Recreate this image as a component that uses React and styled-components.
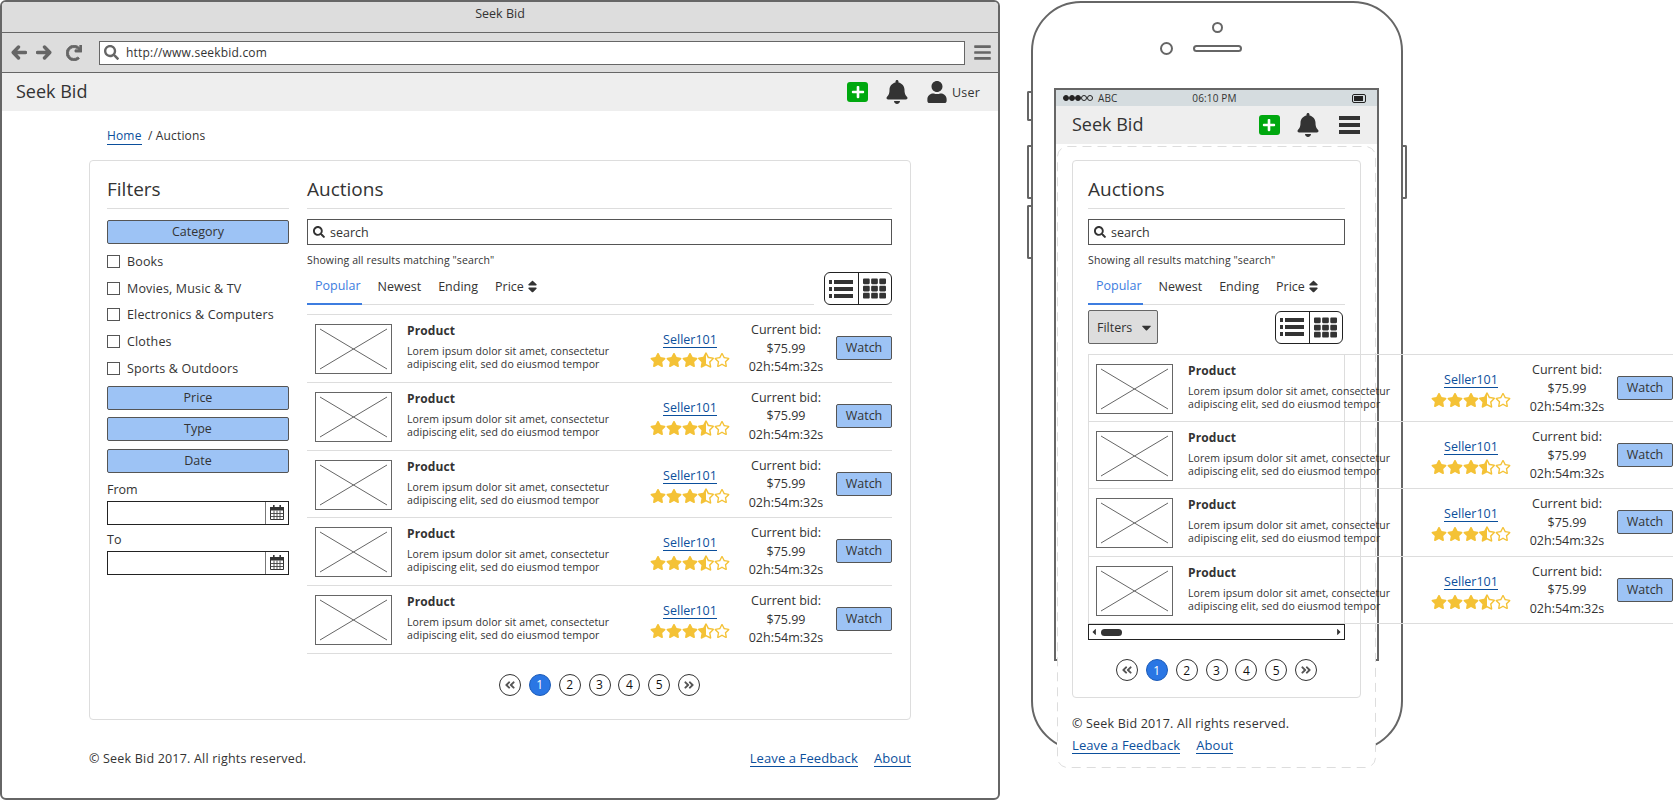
import React from "react";
import styled, { createGlobalStyle } from "styled-components";
import {
  FaAngleDoubleLeft,
  FaAngleDoubleRight,
  FaBars,
  FaBell,
  FaCaretDown,
  FaCaretLeft,
  FaCaretRight,
  FaPlus,
  FaRedo,
  FaRegStar,
  FaSearch,
  FaSort,
  FaStar,
  FaStarHalfAlt,
  FaTh,
  FaUser,
} from "react-icons/fa";

const INK = "#333";
const LINE = "#ddd";
const LINK = "#0b4f9c";

const GlobalStyle = createGlobalStyle`
  html, body {
    margin: 0;
    background: #fff;
    overflow: hidden;
  }
  body {
    font-family: "Open Sans", "Liberation Sans", sans-serif;
    color: ${INK};
  }
  * { box-sizing: border-box; }
`;

const Page = styled.div`
  display: flex;
  align-items: flex-start;
  gap: 31px;
  width: 1673px;
  height: 800px;
`;

/* desktop browser */
const Browser = styled.div`
  width: 1000px;
  height: 800px;
  border: 2px solid #666;
  border-radius: 6px;
  overflow: hidden;
  flex: none;
`;

const TitleBar = styled.div`
  height: 31px;
  background: #ddd;
  border-bottom: 1px solid #666;
  font-size: 12.5px;
  text-align: center;
  line-height: 24px;
`;

const Toolbar = styled.div`
  display: flex;
  align-items: center;
  height: 40px;
  background: #ddd;
  border-bottom: 1px solid #666;
  color: #666;
  padding-left: 9px;
`;

const NavIcons = styled.div`
  display: flex;
  align-items: center;
  gap: 9px;
  width: 88px;
  flex: none;
  font-size: 16px;
`;

const ReloadIcon = styled(FaRedo)`
  margin-left: 5px;
  stroke: currentColor;
  stroke-width: 30px;
`;

const UrlField = styled.div`
  display: flex;
  align-items: center;
  gap: 7px;
  width: 866px;
  height: 24px;
  flex: none;
  background: #fff;
  border: 1px solid #666;
  padding: 0 4px;
  color: ${INK};
  font-size: 12px;
  letter-spacing: 0.2px;
  svg { color: #666; font-size: 15px; }
`;

const MenuSlot = styled.div`
  display: flex;
  margin-left: 8px;
  font-size: 19px;
`;

const AppBar = styled.div`
  display: flex;
  align-items: center;
  height: 38px;
  background: #eee;
  padding: 0 ${p => (p.$phone ? "17px 0 16px" : "18px 0 14px")};
`;

const Brand = styled.div`
  font-size: 18px;
  flex: 1;
  margin-top: -2px;
`;

const AddButton = styled.div`
  display: flex;
  align-items: center;
  justify-content: center;
  width: 21px;
  height: 20px;
  background: #00a80f;
  border-radius: 3px;
  color: #fff;
  font-size: 14px;
`;

const BellSlot = styled.div`
  display: flex;
  margin-left: 16.5px;
  font-size: 24px;
`;

const UserSlot = styled.div`
  display: flex;
  align-items: center;
  gap: 4.5px;
  margin-left: 17px;
  font-size: 12.5px;
  letter-spacing: 0.2px;
  svg { font-size: 22px; }
`;

const MenuBars = styled.div`
  display: flex;
  flex-direction: column;
  gap: 3px;
  width: 21px;
  margin-left: 19px;
  span {
    height: 4px;
    background: ${INK};
  }
`;

const Breadcrumb = styled.div`
  margin: 17px 0 0 105px;
  height: 17px;
  font-size: 12px;
  line-height: 16px;
  letter-spacing: 0.15px;
`;

const Link = styled.a`
  color: ${LINK};
  border-bottom: 1px solid ${LINK};
`;

const Card = styled.div`
  display: flex;
  gap: 18px;
  width: ${p => (p.$phone ? "289px" : "822px")};
  height: ${p => (p.$phone ? "538px" : "560px")};
  margin: ${p => (p.$phone ? "13px 0 0 15px" : "15px 0 0 87px")};
  padding: ${p => (p.$phone ? "16px 15px" : "16px 17px")};
  border: 1px solid ${LINE};
  border-radius: 4px;
`;

const FiltersColumn = styled.div`
  width: 182px;
  flex: none;
`;

const AuctionsColumn = styled.div`
  width: ${p => (p.$phone ? "257px" : "585px")};
  flex: none;
`;

const Heading = styled.h2`
  margin: 0;
  height: 32px;
  font-size: 19px;
  font-weight: 400;
  line-height: 24px;
  border-bottom: 1px solid ${LINE};
`;

const FilterButton = styled.div`
  height: 24px;
  margin-top: ${p => p.$top || "7.5px"};
  background: #9dc3f5;
  border: 1px solid #555;
  border-radius: 2px;
  font-size: 12.5px;
  line-height: 21px;
  text-align: center;
`;

const CheckList = styled.div`
  margin-top: 4px;
  margin-bottom: 4px;
`;

const CheckRow = styled.div`
  display: flex;
  align-items: center;
  gap: 7px;
  height: 26.75px;
  font-size: 12.5px;
  letter-spacing: 0.15px;
`;

const CheckBox = styled.span`
  width: 13px;
  height: 13px;
  border: 1px solid #555;
  flex: none;
`;

const FieldLabel = styled.div`
  height: 15px;
  margin-top: ${p => p.$top};
  font-size: 12.5px;
  line-height: 15px;
`;

const DateField = styled.div`
  display: flex;
  justify-content: flex-end;
  height: 24px;
  margin-top: 4px;
  border: 1px solid #222;
`;

const CalendarButton = styled.div`
  display: flex;
  align-items: center;
  justify-content: center;
  width: 23px;
  border-left: 1px solid #777;
`;

const SearchBox = styled.div`
  display: flex;
  align-items: center;
  gap: 5px;
  height: 26px;
  margin-top: 10px;
  padding: 0 5px;
  border: 1px solid #555;
  font-size: 12.5px;
  svg { font-size: 12px; }
`;

const ResultNote = styled.div`
  height: 14px;
  margin-top: 8px;
  font-size: 10.5px;
  line-height: 14px;
  letter-spacing: 0.12px;
`;

const TabRow = styled.div`
  display: flex;
  align-items: flex-end;
  justify-content: space-between;
  height: 38px;
`;

const Tabs = styled.div`
  display: flex;
  gap: 8px;
  flex: ${p => (p.$phone ? "1" : "none")};
  width: ${p => (p.$phone ? "auto" : "507px")};
  height: 38px;
  border-bottom: 1px solid ${LINE};
`;

const Tab = styled.div`
  display: flex;
  align-items: center;
  gap: 1px;
  height: 38px;
  padding: 0 1px 0 8px;
  font-size: 12.5px;
  color: ${p => (p.$active ? "#3d7de0" : INK)};
  border-bottom: ${p => (p.$active ? "2px solid #3d7de0" : "none")};
  svg { font-size: 15px; }
`;

const ViewToggle = styled.div`
  display: flex;
  width: 68px;
  height: 33px;
  border: 1px solid #222;
  border-radius: 6px;
  background: #fff;
`;

const ToggleCell = styled.div`
  flex: 1;
  display: flex;
  align-items: center;
  justify-content: center;
  font-size: 23px;
  border-left: ${p => (p.$divided ? "1px solid #222" : "none")};
`;

const ControlRow = styled.div`
  display: flex;
  align-items: center;
  justify-content: space-between;
  height: 34px;
  margin-top: 5px;
  padding-right: 2px;
`;

const DropButton = styled.div`
  display: flex;
  align-items: center;
  gap: 7px;
  width: 70px;
  height: 34px;
  padding-left: 8px;
  background: #ddd;
  border: 1px solid #666;
  border-radius: 2px;
  font-size: 12.5px;
  svg { font-size: 15px; }
`;

const ScrollFrame = styled.div`
  width: 257px;
  height: 270px;
  margin-top: 10px;
  box-shadow: inset 0 0 0 1px ${LINE};
`;

const RowList = styled.div`
  width: 585px;
  margin-top: ${p => p.$top || "0"};
  border-bottom: 1px solid ${LINE};
`;

const Row = styled.div`
  display: flex;
  align-items: flex-start;
  height: ${p => (p.$phone ? "67.2px" : "67.75px")};
  border-top: 1px solid ${LINE};
`;

const Thumb = styled.svg`
  width: 77px;
  height: 50px;
  margin: 9px 0 0 8px;
  border: 1px solid #666;
  flex: none;
`;

const ProductInfo = styled.div`
  width: 243px;
  flex: none;
  margin-left: 15px;
  padding-top: 9px;
`;

const ProductName = styled.div`
  height: 14px;
  font-size: 12px;
  font-weight: 700;
  line-height: 14px;
  letter-spacing: 0.1px;
`;

const ProductText = styled.div`
  margin-top: 7px;
  font-size: 10.5px;
  line-height: 13px;
  letter-spacing: 0.09px;
`;

const SellerCell = styled.div`
  display: flex;
  flex-direction: column;
  align-items: center;
  width: 80px;
  flex: none;
  padding-top: 18px;
  font-size: 12.5px;
  line-height: 14px;
`;

const Stars = styled.div`
  display: flex;
  margin-top: 4px;
  color: #f4c236;
  font-size: 16px;
`;

const BidCell = styled.div`
  width: 88px;
  flex: none;
  margin-left: 12px;
  padding-top: 6px;
  font-size: 12.5px;
  line-height: 18.5px;
  text-align: center;
`;

const WatchButton = styled.div`
  width: 56px;
  height: 24px;
  margin: 21px 0 0 6px;
  flex: none;
  background: #9dc3f5;
  border: 1px solid #555;
  border-radius: 2px;
  font-size: 12.5px;
  line-height: 21px;
  text-align: center;
`;

const Pagination = styled.div`
  display: flex;
  justify-content: center;
  gap: 7.9px;
  margin-top: ${p => p.$top};
`;

const PageDot = styled.div`
  display: flex;
  align-items: center;
  justify-content: center;
  width: 22px;
  height: 22px;
  border-radius: 50%;
  border: 1px solid ${p => (p.$active ? "#1d5cb8" : INK)};
  background: ${p => (p.$active ? "#2a76e4" : "#fff")};
  color: ${p => (p.$active ? "#fff" : "#111")};
  font-size: 12px;
  svg { font-size: 12px; color: #555; }
`;

const Footer = styled.div`
  display: flex;
  align-items: center;
  justify-content: space-between;
  width: 822px;
  margin: 30px 0 0 87px;
  font-size: 12.5px;
  line-height: 16px;
  letter-spacing: 0.2px;
`;

const FooterLinks = styled.div`
  display: flex;
  gap: 16px;
  font-size: 13px;
  letter-spacing: 0.1px;
`;

/* phone */
const Phone = styled.div`
  position: relative;
  display: flex;
  flex-direction: column;
  align-items: center;
  width: 372px;
  height: 750px;
  margin-top: 1px;
  flex: none;
  padding-top: 19px;
  border: 2px solid #666;
  border-radius: 50px;
`;

const SideButton = styled.span`
  position: absolute;
  top: ${p => p.$top}px;
  ${p => (p.$right ? "right: -6px;" : "left: -6px;")}
  width: 5px;
  height: ${p => p.$height}px;
  border: 1px solid #666;
  border-width: ${p => (p.$right ? "2px 2px 2px 0" : "2px 0 2px 2px")};
  border-radius: ${p => (p.$right ? "0 2px 2px 0" : "2px 0 0 2px")};
`;

const Sensor = styled.span`
  width: 11px;
  height: 11px;
  flex: none;
  border: 2px solid #666;
  border-radius: 50%;
`;

const EarRow = styled.div`
  display: flex;
  align-items: center;
  gap: 20px;
  flex: none;
  margin-top: 9px;
  padding-right: 33px;
`;

const Camera = styled.span`
  width: 13px;
  height: 13px;
  border: 2px solid #666;
  border-radius: 50%;
`;

const Speaker = styled.span`
  width: 49px;
  height: 7px;
  border: 2px solid #666;
  border-radius: 4px;
`;

const Screen = styled.div`
  width: 325px;
  height: 573px;
  margin: 33px 1px 0 0;
  border: 2px solid #666;
  flex: none;
`;

const StatusBar = styled.div`
  display: flex;
  align-items: center;
  justify-content: space-between;
  height: 16px;
  padding: 0 11px 0 7px;
  background: #d5dcdf;
  font-size: 10px;
  letter-spacing: 0.15px;
`;

const SignalGroup = styled.div`
  display: flex;
  align-items: center;
  gap: 5px;
  width: 110px;
`;

const SignalDots = styled.div`
  display: flex;
`;

const SignalDot = styled.span`
  width: 6px;
  height: 6px;
  border-radius: 50%;
  border: 1px solid #222;
  background: ${p => (p.$on ? "#222" : "transparent")};
`;

const BatterySlot = styled.div`
  display: flex;
  justify-content: flex-end;
  width: 110px;
`;

const Battery = styled.span`
  width: 14px;
  height: 9px;
  padding: 1px;
  border: 1px solid #222;
  border-radius: 2px;
  &::before {
    content: "";
    display: block;
    width: 9px;
    height: 5px;
    background: #222;
  }
`;

const DashedPanel = styled.div`
  position: relative;
  width: 319px;
  height: 622px;
  margin: 2px 0 0 1px;
  padding-top: 1px;
  background: #fff;
  border-radius: 10px;
`;

const DashedOutline = styled.svg`
  position: absolute;
  top: 0;
  left: 0;
  width: 319px;
  height: 622px;
  pointer-events: none;
`;

const PhoneFooter = styled.div`
  margin: 18px 0 0 15px;
  font-size: 12.5px;
  line-height: 16px;
  letter-spacing: 0.2px;
`;

const PhoneLinks = styled.div`
  display: flex;
  gap: 16px;
  margin-top: 5px;
  font-size: 13px;
  letter-spacing: 0.1px;
`;

const ScrollBar = styled.div`
  display: flex;
  align-items: center;
  justify-content: space-between;
  width: 257px;
  height: 16px;
  background: #fff;
  border: 1px solid #222;
  font-size: 10px;
`;

const ScrollThumb = styled.span`
  width: 21px;
  height: 7px;
  margin-right: auto;
  margin-left: 2px;
  background: #333;
  border-radius: 4px;
`;

const filterNames = ["Books", "Movies, Music & TV", "Electronics & Computers", "Clothes", "Sports & Outdoors"];

const NavArrow = ({ flip }) => (
  <svg width="16" height="15" viewBox="0 0 16 15" style={flip ? { transform: "scaleX(-1)" } : undefined}>
    <path d="M7.5 2 L2.2 7.5 L7.5 13 M3 7.5 H14.5" stroke="#666" strokeWidth="3.4" fill="none" strokeLinecap="round" strokeLinejoin="round" />
  </svg>
);

const CalendarIcon = () => (
  <svg width="16" height="17" viewBox="0 0 16 17">
    <path d="M1.5 3.5h13v12h-13z" fill="#fff" stroke="#333" />
    <path d="M1 3h14v3.5H1z" fill="#333" />
    <path d="M4 1h1.6v4H4zM10.4 1H12v4h-1.6z" fill="#333" />
    <path d="M1.5 9.5h13M1.5 12.5h13M5 6.5v9M8 6.5v9M11 6.5v9" stroke="#444" strokeWidth="0.9" fill="none" />
  </svg>
);

const ListIcon = () => (
  <svg width="24" height="20" viewBox="0 0 24 20">
    <path d="M0 1h3v4H0zM0 8h3v4H0zM0 15h3v4H0zM5 1h19v4H5zM5 8h19v4H5zM5 15h19v4H5z" fill="#333" />
  </svg>
);

const PlaceholderImage = () => (
  <Thumb viewBox="0 0 75 48" preserveAspectRatio="none">
    <path d="M4 4 L71 44 M71 4 L4 44" stroke="#666" strokeWidth="1" fill="none" />
  </Thumb>
);

const ProductRow = ({ phone }) => (
  <Row $phone={phone}>
    <PlaceholderImage />
    <ProductInfo>
      <ProductName>Product</ProductName>
      <ProductText>
        Lorem ipsum dolor sit amet, consectetur
        <br />
        adipiscing elit, sed do eiusmod tempor
      </ProductText>
    </ProductInfo>
    <SellerCell>
      <Link>Seller101</Link>
      <Stars>
        <FaStar />
        <FaStar />
        <FaStar />
        <FaStarHalfAlt />
        <FaRegStar />
      </Stars>
    </SellerCell>
    <BidCell>
      Current bid:
      <br />
      $75.99
      <br />
      02h:54m:32s
    </BidCell>
    <WatchButton>Watch</WatchButton>
  </Row>
);

const TabsBar = ({ phone }) => (
  <Tabs $phone={phone}>
    <Tab $active>Popular</Tab>
    <Tab>Newest</Tab>
    <Tab>Ending</Tab>
    <Tab>
      Price
      <FaSort />
    </Tab>
  </Tabs>
);

const Toggle = () => (
  <ViewToggle>
    <ToggleCell>
      <ListIcon />
    </ToggleCell>
    <ToggleCell $divided>
      <FaTh />
    </ToggleCell>
  </ViewToggle>
);

const Pager = ({ top }) => (
  <Pagination $top={top}>
    <PageDot>
      <FaAngleDoubleLeft />
    </PageDot>
    {[1, 2, 3, 4, 5].map(n => (
      <PageDot key={n} $active={n === 1}>
        {n}
      </PageDot>
    ))}
    <PageDot>
      <FaAngleDoubleRight />
    </PageDot>
  </Pagination>
);

const SearchRow = () => (
  <>
    <SearchBox>
      <FaSearch />
      search
    </SearchBox>
    <ResultNote>Showing all results matching "search"</ResultNote>
  </>
);

const DateInput = () => (
  <DateField>
    <CalendarButton>
      <CalendarIcon />
    </CalendarButton>
  </DateField>
);

export default function App() {
  return (
    <Page>
      <GlobalStyle />
      <Browser>
        <TitleBar>Seek Bid</TitleBar>
        <Toolbar>
          <NavIcons>
            <NavArrow />
            <NavArrow flip />
            <ReloadIcon />
          </NavIcons>
          <UrlField>
            <FaSearch />
            http://www.seekbid.com
          </UrlField>
          <MenuSlot>
            <FaBars />
          </MenuSlot>
        </Toolbar>
        <AppBar>
          <Brand>Seek Bid</Brand>
          <AddButton>
            <FaPlus />
          </AddButton>
          <BellSlot>
            <FaBell />
          </BellSlot>
          <UserSlot>
            <FaUser />
            User
          </UserSlot>
        </AppBar>
        <Breadcrumb>
          <Link>Home</Link> &nbsp;/ Auctions
        </Breadcrumb>
        <Card>
          <FiltersColumn>
            <Heading>Filters</Heading>
            <FilterButton $top="11px">Category</FilterButton>
            <CheckList>
              {filterNames.map(name => (
                <CheckRow key={name}>
                  <CheckBox />
                  {name}
                </CheckRow>
              ))}
            </CheckList>
            <FilterButton $top="0">Price</FilterButton>
            <FilterButton>Type</FilterButton>
            <FilterButton>Date</FilterButton>
            <FieldLabel $top="9px">From</FieldLabel>
            <DateInput />
            <FieldLabel $top="7px">To</FieldLabel>
            <DateInput />
          </FiltersColumn>
          <AuctionsColumn>
            <Heading>Auctions</Heading>
            <SearchRow />
            <TabRow>
              <TabsBar />
              <Toggle />
            </TabRow>
            <RowList $top="9px">
              {[0, 1, 2, 3, 4].map(i => (
                <ProductRow key={i} />
              ))}
            </RowList>
            <Pager top="20px" />
          </AuctionsColumn>
        </Card>
        <Footer>
          <span>© Seek Bid 2017. All rights reserved.</span>
          <FooterLinks>
            <Link>Leave a Feedback</Link>
            <Link>About</Link>
          </FooterLinks>
        </Footer>
      </Browser>

      <Phone>
        <SideButton $top={88} $height={30} />
        <SideButton $top={142} $height={54} />
        <SideButton $top={202} $height={54} />
        <SideButton $right $top={142} $height={54} />
        <Sensor />
        <EarRow>
          <Camera />
          <Speaker />
        </EarRow>
        <Screen>
          <StatusBar>
            <SignalGroup>
              <SignalDots>
                {[1, 1, 1, 0, 0].map((on, i) => (
                  <SignalDot key={i} $on={on} />
                ))}
              </SignalDots>
              ABC
            </SignalGroup>
            <span>06:10 PM</span>
            <BatterySlot>
              <Battery />
            </BatterySlot>
          </StatusBar>
          <AppBar $phone>
            <Brand>Seek Bid</Brand>
            <AddButton>
              <FaPlus />
            </AddButton>
            <BellSlot>
              <FaBell />
            </BellSlot>
            <MenuBars>
              <span />
              <span />
              <span />
            </MenuBars>
          </AppBar>
          <DashedPanel>
            <DashedOutline viewBox="0 0 319 622">
              <rect x="0.5" y="0.5" width="318" height="621" rx="10" fill="none" stroke={LINE} strokeDasharray="9 6" />
            </DashedOutline>
            <Card $phone>
              <AuctionsColumn $phone>
                <Heading>Auctions</Heading>
                <SearchRow />
                <TabRow>
                  <TabsBar phone />
                </TabRow>
                <ControlRow>
                  <DropButton>
                    Filters
                    <FaCaretDown />
                  </DropButton>
                  <Toggle />
                </ControlRow>
                <ScrollFrame>
                  <RowList>
                    {[0, 1, 2, 3].map(i => (
                      <ProductRow key={i} phone />
                    ))}
                  </RowList>
                </ScrollFrame>
                <ScrollBar>
                  <FaCaretLeft />
                  <ScrollThumb />
                  <FaCaretRight />
                </ScrollBar>
                <Pager top="19px" />
              </AuctionsColumn>
            </Card>
            <PhoneFooter>
              © Seek Bid 2017. All rights reserved.
              <PhoneLinks>
                <Link>Leave a Feedback</Link>
                <Link>About</Link>
              </PhoneLinks>
            </PhoneFooter>
          </DashedPanel>
        </Screen>
      </Phone>
    </Page>
  );
}
